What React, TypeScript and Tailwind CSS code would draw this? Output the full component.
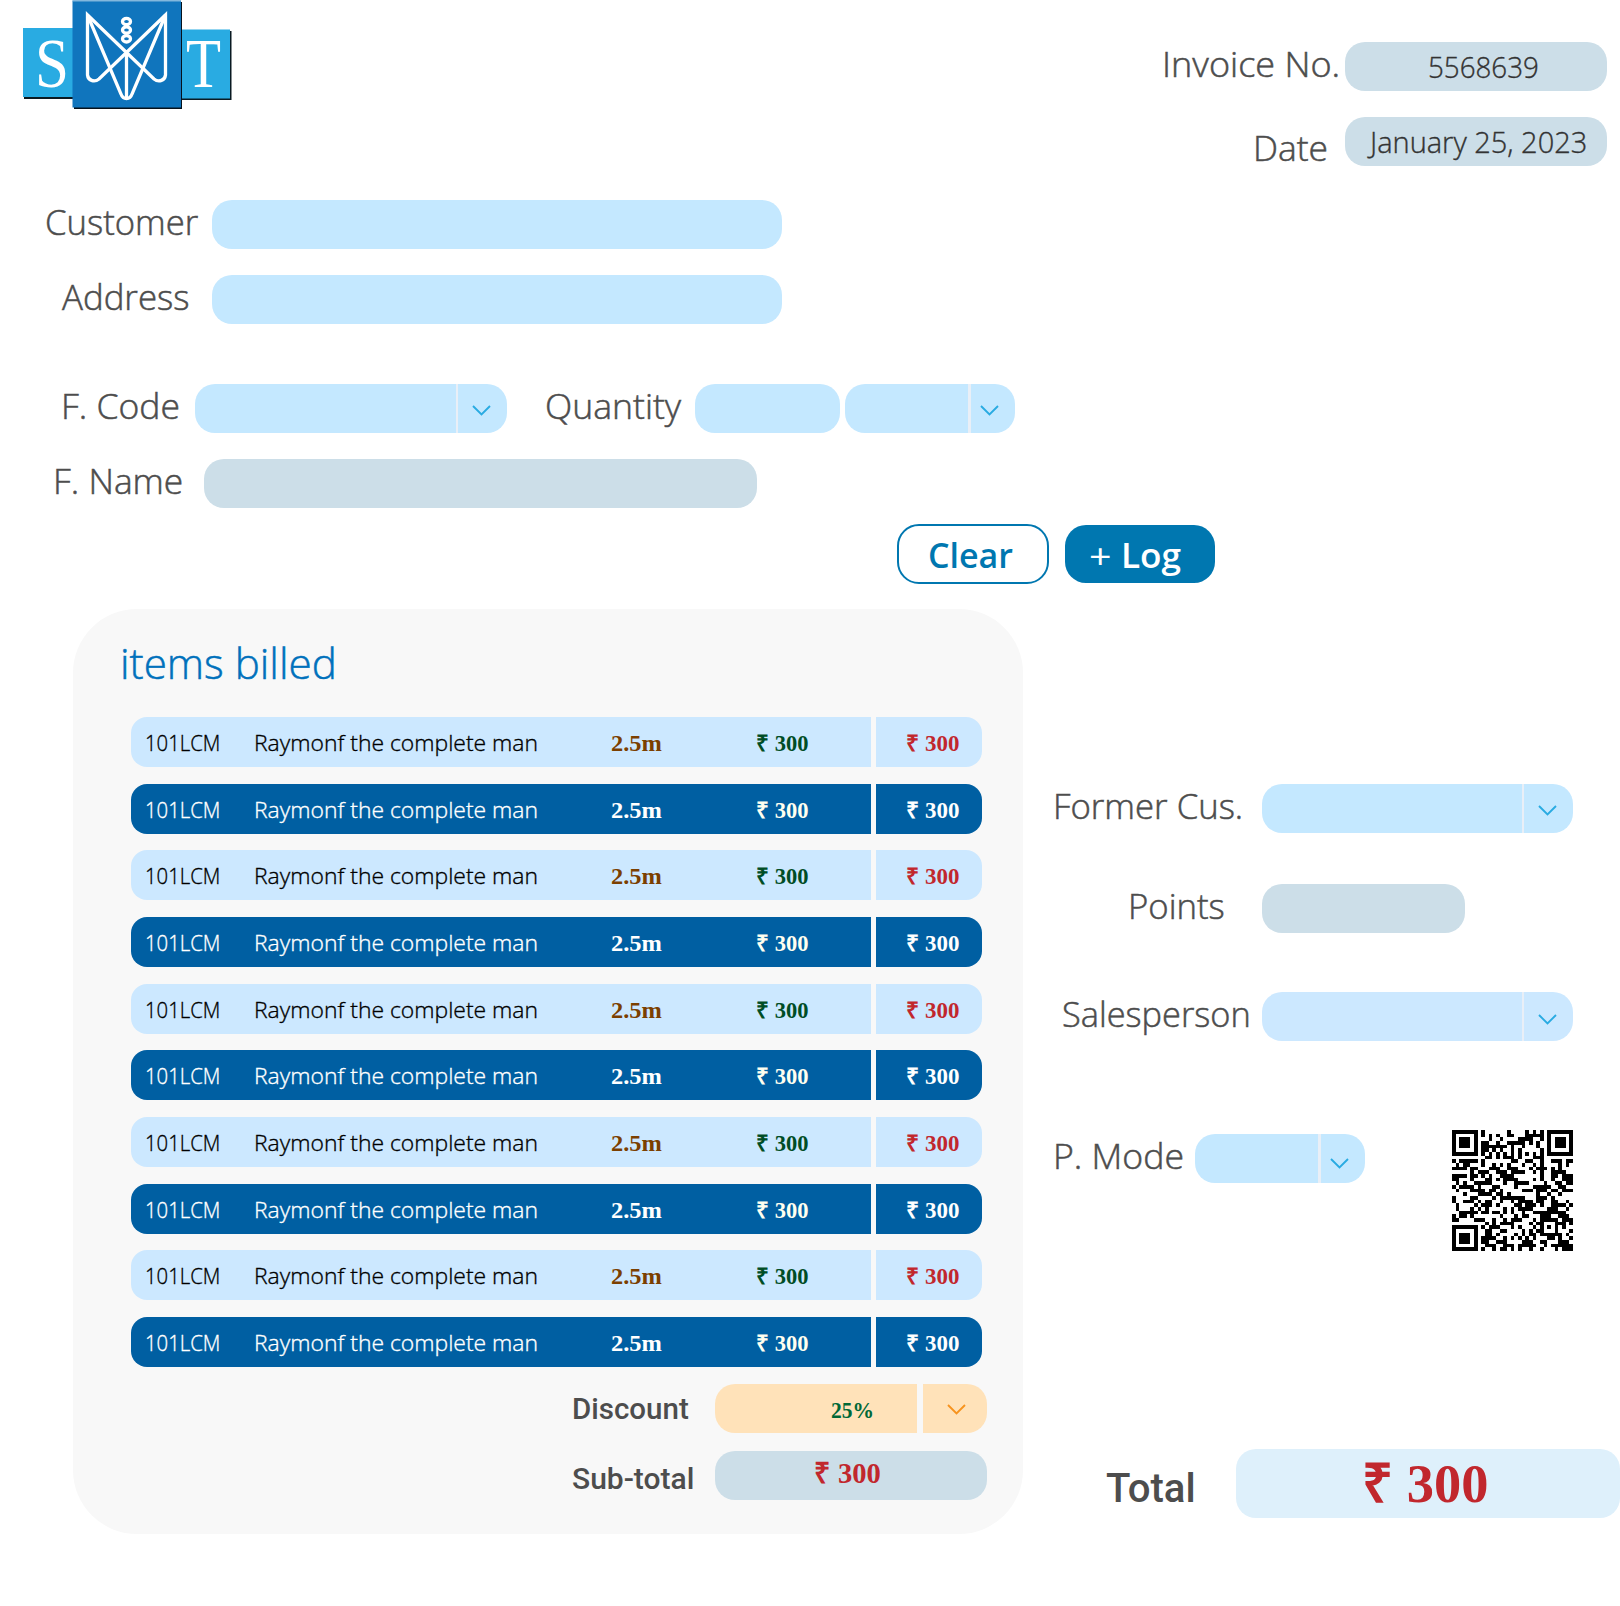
import { useLayoutEffect, useRef, useState, type ReactNode } from "react";

/* Text squeezed or stretched horizontally to the width of its own box. */
function Fit({ className, children }: { className: string; children: ReactNode }) {
  const box = useRef<HTMLDivElement>(null);
  const text = useRef<HTMLSpanElement>(null);
  const [scale, setScale] = useState(1);
  useLayoutEffect(() => {
    if (box.current && text.current) {
      setScale(box.current.clientWidth / text.current.offsetWidth);
    }
  }, []);
  return (
    <div ref={box} className={`shrink-0 ${className}`}>
      <span
        ref={text}
        className="inline-block origin-left whitespace-pre"
        style={{ transform: `scaleX(${scale})` }}
      >
        {children}
      </span>
    </div>
  );
}

/* Between light and regular: the light face with a thin outline. */
const semilight = "font-light [-webkit-text-stroke:0.5px_currentColor]";
const semilightSmall = "font-light [-webkit-text-stroke:0.35px_currentColor]";

function Label({ className, children }: { className: string; children: ReactNode }) {
  return (
    <Fit className={`text-[34px] leading-[45px] text-[#4d4d4d] ${semilight} ${className}`}>{children}</Fit>
  );
}

function Chevron({ className }: { className: string }) {
  return (
    <svg viewBox="0 0 19 11" className={`h-[11px] w-[19px] shrink-0 ${className}`} fill="none" stroke="currentColor" strokeWidth="1.9">
      <path d="M1 1 L9.5 9.5 L18 1" />
    </svg>
  );
}

function Field({ className }: { className: string }) {
  return <div className={`h-[49px] shrink-0 rounded-[20px] ${className}`} />;
}

function Select({ className, arrow }: { className: string; arrow: string }) {
  return (
    <div className={`flex h-[49px] shrink-0 justify-end overflow-hidden rounded-[20px] ${className}`}>
      <div className={`flex border-[#e9eff7] ${arrow}`}>
        <Chevron className="text-[#29abe2]" />
      </div>
    </div>
  );
}

function Logo() {
  return (
    <svg viewBox="0 0 210 110" className="ml-[23px] h-[110px] w-[210px] shrink-0">
      <rect x="1" y="30" width="53" height="69" fill="#0a1a22" />
      <rect x="0" y="28" width="52" height="69" fill="#29abe2" />
      <rect x="158" y="31" width="50.500" height="69" fill="#0a1a22" />
      <rect x="158" y="29.500" width="49" height="69" fill="#29abe2" />
      <rect x="51" y="2" width="108" height="107" fill="#06121c" />
      <rect x="49.500" y="0.500" width="108.500" height="107" fill="#1075bd" />
      <path d="M49.500 1 H158" stroke="#7fb6dc" strokeWidth="1" />
      <text x="12" y="86.500" fontSize="69" fill="#fff" fontFamily="Liberation Serif" textLength="34" lengthAdjust="spacingAndGlyphs">S</text>
      <text x="163" y="87" fontSize="69" fill="#fff" fontFamily="Liberation Serif" textLength="35" lengthAdjust="spacingAndGlyphs">T</text>
      <g fill="none" stroke="#fff" strokeWidth="3.300" strokeLinejoin="miter">
        <path d="M64.500 15 V75 C65 80 71 83 76 79 L142.500 15 V75 C142 80 136 83 131 79 Z" />
        <path d="M64.500 15 L98 94 C100 100 107 100 109 94 L142.500 15" />
        <path d="M103.500 52 V98" />
        <ellipse cx="103.500" cy="21.500" rx="4" ry="3.200" />
        <ellipse cx="103.500" cy="30" rx="4" ry="3.200" />
        <ellipse cx="103.500" cy="38.800" rx="4" ry="3.200" />
      </g>
    </svg>
  );
}

const finder = (x: number, y: number) =>
  `M${x} ${y}h7v7h-7zM${x + 1} ${y + 1}v5h5v-5zM${x + 2} ${y + 2}h3v3h-3z`;

function QrCode() {
  const cells: string[] = [];
  let seed = 7919;
  for (let y = 0; y < 33; y++) {
    for (let x = 0; x < 33; x++) {
      seed = (seed * 1103515 + 12345) % 2147483648;
      const inFinder = (x < 8 && y < 8) || (x > 24 && y < 8) || (x < 8 && y > 24);
      const inAlignment = x > 23 && x < 29 && y > 23 && y < 29;
      if (inFinder || inAlignment) continue;
      const timing = x === 6 || y === 6;
      const on = timing ? (x + y) % 2 === 0 : (seed >> 14) % 2 === 0;
      if (on) cells.push(`M${x} ${y}h1v1h-1z`);
    }
  }
  return (
    <svg viewBox="0 0 33 33" shapeRendering="crispEdges" className="ml-[87px] -mt-[4px] h-[121px] w-[121px] shrink-0">
      <path d={cells.join("")} />
      <path
        fillRule="evenodd"
        d={finder(0, 0) + finder(26, 0) + finder(0, 26) + "M24 24h5v5h-5zM25 25v3h3v-3zM26 26h1v1h-1z"}
      />
    </svg>
  );
}

const serif = "font-['Liberation_Serif'] font-bold";

function Row({ dark }: { dark: boolean }) {
  const bg = dark ? "bg-[#005fa2]" : "bg-[#cce8ff]";
  return (
    <div className={`flex h-[50px] gap-[5px] leading-[50px] ${dark ? "text-white" : "text-black"}`}>
      <div className={`flex w-[740px] rounded-l-[16px] pl-[14px] ${bg}`}>
        <Fit className={`mt-px w-[75px] text-[22.500px] ${semilightSmall}`}>101LCM</Fit>
        <Fit className={`mt-px ml-[34px] w-[284px] text-[22.500px] ${semilightSmall}`}>Raymonf the complete man</Fit>
        <Fit className={`ml-[73px] mt-[2px] w-[51px] text-[22.500px] ${serif} ${dark ? "" : "text-[#7b3f00]"}`}>2.5m</Fit>
        <Fit className={`ml-[94px] mt-[2px] w-[52px] text-[22.500px] ${serif} ${dark ? "text-[#fffff0]" : "text-[#004d25]"}`}>₹ 300</Fit>
      </div>
      <div className={`w-[105.500px] rounded-r-[16px] pl-[30px] ${bg}`}>
        <Fit className={`mt-[2px] w-[52.500px] text-[22.500px] ${serif} ${dark ? "" : "text-[#c1272d]"}`}>₹ 300</Fit>
      </div>
    </div>
  );
}

export default function App() {
  return (
    <div className="h-[1606px] w-[1620px] overflow-hidden bg-white font-['Open_Sans',sans-serif]">
      <header className="flex h-[200px] justify-between">
        <Logo />
        <div className="flex flex-col gap-[26px] pt-[42px] pr-[13px]">
          <div className="flex justify-end">
            <Label className="w-[178px]">Invoice No.</Label>
            <div className={`ml-[5px] flex h-[49px] w-[262px] rounded-[20px] bg-[#ccdee8] pl-[83px] text-[29px] leading-[50px] text-[#333333] ${semilightSmall}`}>
              <Fit className="w-[111px]">5568639</Fit>
            </div>
          </div>
          <div className="flex justify-end">
            <Label className="mt-[9px] w-[75px]">Date</Label>
            <div className={`ml-[17px] flex h-[49px] w-[262px] rounded-[20px] bg-[#ccdee8] pl-[25px] text-[29px] leading-[50px] text-[#333333] ${semilightSmall}`}>
              <Fit className="w-[217px]">January 25, 2023</Fit>
            </div>
          </div>
        </div>
      </header>

      <section className="flex h-[384px] flex-col">
        <div className="flex h-[75px] pl-[45px]">
          <Label className="w-[153px]">Customer</Label>
          <Field className="ml-[14px] w-[569.500px] bg-[#c4e8ff]" />
        </div>
        <div className="flex h-[109px] pl-[62px]">
          <Label className="w-[127px]">Address</Label>
          <Field className="ml-[23px] w-[569.500px] bg-[#c4e8ff]" />
        </div>
        <div className="flex h-[75px] pl-[61px]">
          <Label className="w-[119px]">F. Code</Label>
          <Select className="ml-[15px] w-[311.500px] bg-[#c4e8ff]" arrow="border-l-2 w-[51px] pt-[21px] pl-[14px]" />
          <Label className="ml-[38.500px] w-[136px]">Quantity</Label>
          <Field className="ml-[14px] w-[145px] bg-[#c4e8ff]" />
          <Select className="ml-[5px] w-[170px] bg-[#c4e8ff]" arrow="border-l-3 w-[47px] pt-[21px] pl-[9px]" />
        </div>
        <div className="flex h-[65px] pl-[53px]">
          <Label className="w-[130px]">F. Name</Label>
          <Field className="ml-[20.500px] w-[553px] bg-[#ccdee8]" />
        </div>
        <div className="flex h-[60px] items-start pl-[897px]">
          <button className="flex h-[60px] w-[152px] rounded-[22px] border-2 border-[#0077b0] pl-[29px] text-[34px] leading-[59px] font-semibold text-[#0077b0]">
            <Fit className="w-[85px]">Clear</Fit>
          </button>
          <button className="mt-px ml-[15.500px] flex h-[58px] w-[150.500px] rounded-[21px] bg-[#0077b0] pl-[23px] text-[34px] leading-[60px] text-white">
            <Fit className="w-[22px] pt-px font-medium">+</Fit>
            <Fit className="ml-[11px] w-[60px] font-semibold">Log</Fit>
          </button>
        </div>
      </section>

      <div className="flex pt-[25px]">
        <section className="ml-[73px] h-[924.500px] w-[950px] rounded-[64px] bg-[#f8f8f8] pl-[58px]">
          <h1 className={`-ml-[11px] pt-[24px] pb-[24px] text-[42px] leading-[60px] text-[#0071bc] ${semilight}`}>
            <Fit className="w-[217px]">items billed</Fit>
          </h1>
          <div className="flex flex-col gap-[16.670px]">
            {Array.from({ length: 10 }, (_, i) => (
              <Row key={i} dark={i % 2 === 1} />
            ))}
          </div>
          <div className="mt-[17px] flex pl-[441px]">
            <Fit className="w-[117px] font-['Roboto'] text-[29px] leading-[50px] font-medium text-[#4d4d4d]">Discount</Fit>
            <div className="ml-[25.500px] flex h-[49px] gap-[6px]">
              <div className={`w-[202.500px] rounded-l-[20px] bg-[#ffe2b9] pl-[116px] text-[23px] leading-[53px] text-[#006837] ${serif}`}>
                <Fit className="w-[43px]">25%</Fit>
              </div>
              <div className="w-[64px] rounded-r-[20px] bg-[#ffe2b9] pt-[20px] pl-[24px]">
                <Chevron className="text-[#f7931e]" />
              </div>
            </div>
          </div>
          <div className="mt-[17px] flex pl-[441px]">
            <Fit className="w-[122px] font-['Roboto'] text-[29px] leading-[57px] font-medium text-[#4d4d4d]">Sub-total</Fit>
            <div className={`ml-[20.500px] h-[49px] w-[272.500px] rounded-[20px] bg-[#ccdee8] pl-[99px] text-[29px] leading-[44px] text-[#c1272d] ${serif}`}>
              <Fit className="w-[67px]">₹ 300</Fit>
            </div>
          </div>
        </section>

        <aside className="w-[597px] pt-[175px]">
          <div className="flex h-[100px] pl-[30px]">
            <Label className="w-[190px]">Former Cus.</Label>
            <Select className="ml-[19px] w-[311px] bg-[#c4e8ff]" arrow="border-l-2 w-[51px] pt-[21px] pl-[14px]" />
          </div>
          <div className="flex h-[108px] pl-[105px]">
            <Label className="w-[97px]">Points</Label>
            <Field className="ml-[37px] w-[203px] bg-[#ccdee8]" />
          </div>
          <div className="flex h-[142px] pl-[39px]">
            <Label className="w-[189px]">Salesperson</Label>
            <Select className="ml-[11px] w-[311px] bg-[#cce8ff]" arrow="border-l-2 w-[51px] pt-[21.500px] pl-[14px]" />
          </div>
          <div className="flex h-[315px] pl-[30px]">
            <Label className="w-[131px]">P. Mode</Label>
            <Select className="ml-[11px] w-[170px] bg-[#c4e8ff]" arrow="border-l-3 w-[47px] pt-[24px] pl-[9px]" />
            <QrCode />
          </div>
          <div className="flex pl-[83px]">
            <Fit className="w-[90px] font-['Roboto'] text-[41px] leading-[78px] font-medium text-[#4d4d4d]">Total</Fit>
            <div className={`ml-[40px] h-[69px] w-[384px] rounded-[20px] bg-[#def0fb] pl-[126px] text-[54px] leading-[71px] text-[#c1272d] ${serif}`}>
              <Fit className="w-[127px]">₹ 300</Fit>
            </div>
          </div>
        </aside>
      </div>
    </div>
  );
}
